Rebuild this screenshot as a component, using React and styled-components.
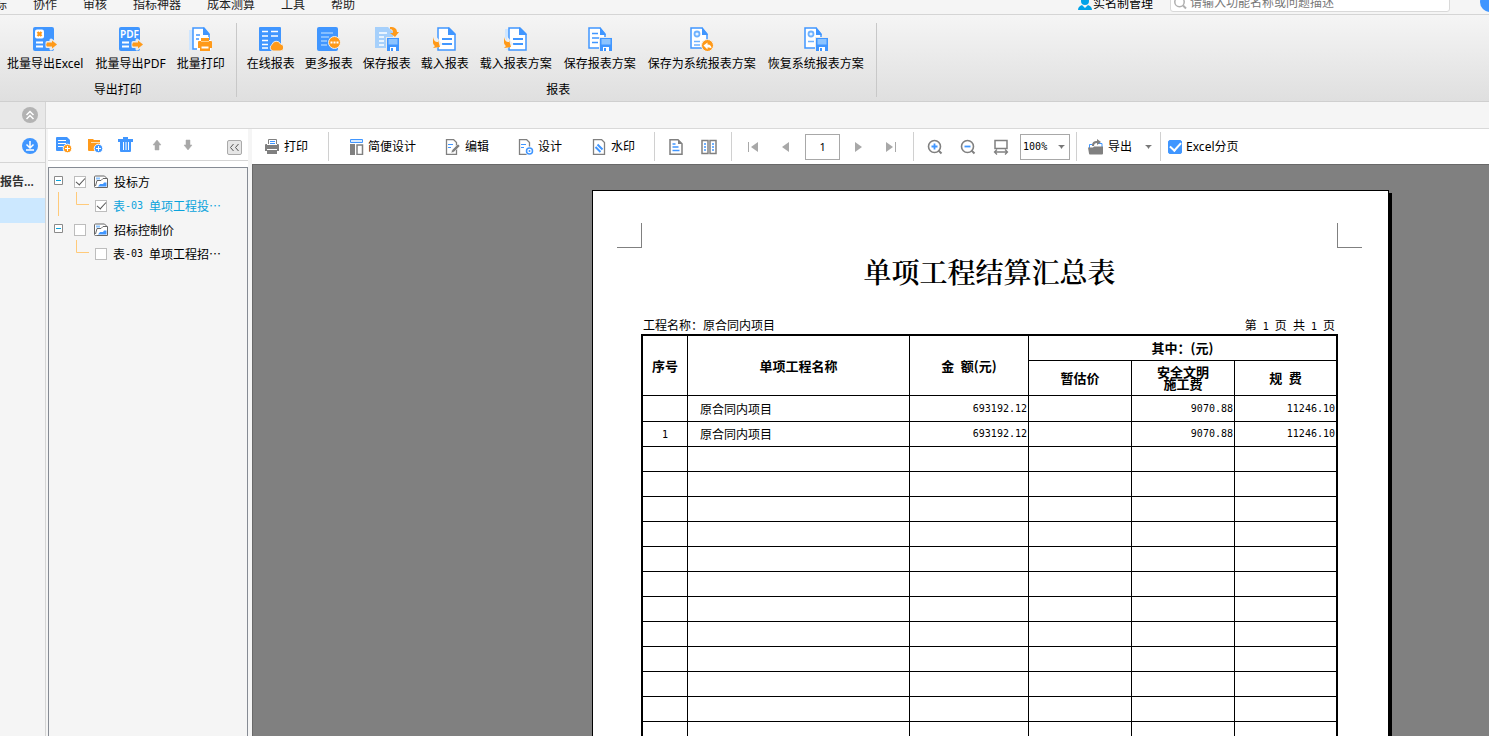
import { useState } from "react";
import styled, { createGlobalStyle, css } from "styled-components";

const GlobalStyle = createGlobalStyle`
  * {
    box-sizing: border-box;
  }
  body {
    margin: 0;
    overflow: hidden;
    color: #000;
    font-family: "Noto Sans", "Noto Sans CJK SC", sans-serif;
    font-size: 12px;
    line-height: 16px;
  }
  button, input, select {
    font: inherit;
    color: inherit;
  }
  svg {
    display: block;
    flex: none;
  }
`;

const Shell = styled.div`
  display: flex;
  flex-direction: column;
  height: 100vh;
  background: #f5f5f5;
`;

const PlainButton = styled.button.attrs({ type: "button" })`
  display: flex;
  align-items: center;
  justify-content: center;
  padding: 0;
  border: none;
  background: transparent;
  white-space: nowrap;
  cursor: pointer;
`;

/* ---------- top menu ---------- */

const TopBar = styled.header`
  display: flex;
  align-items: flex-end;
  flex: none;
  height: 15px;
  overflow: hidden;
  border-bottom: 1px solid #d5d5d5;
`;

const Menu = styled.nav`
  display: flex;
  margin-left: -18px;
`;

const MenuItem = styled(PlainButton)`
  height: 18px;
  padding: 0 13px;
  color: #222;
`;

const Account = styled(PlainButton)`
  height: 20px;
  gap: 1px;
  margin: 0 17px 0 auto;
`;

const SearchBox = styled.label`
  display: flex;
  align-items: center;
  width: 280px;
  height: 18px;
  margin: 0 30px 2px 0;
  padding: 0 2px;
  border: 1px solid #d9d9d9;
  border-radius: 3px;
  background: #fff;
`;

const SearchInput = styled.input`
  flex: 1;
  min-width: 0;
  padding: 0 1px;
  border: none;
  outline: 0;
  background: transparent;

  &::placeholder {
    color: #777;
    opacity: 1;
  }
`;

const RoundButton = styled(PlainButton)`
  flex: none;
  width: 20px;
  height: 20px;
  margin: 0 -11px 2px 0;
  border-radius: 50%;
  background: #4096ff;
  color: #fff;
`;

/* ---------- ribbon ---------- */

const Ribbon = styled.section`
  display: flex;
  flex: none;
  height: 87px;
  padding: 8px 0 4px;
  border-bottom: 1px solid #cfcfcf;
  background: linear-gradient(#f5f5f5, #dfdfdf);
`;

const RibbonGroup = styled.div`
  display: flex;
  flex-direction: column;
  align-items: center;
  padding: 4px 6px 0 ${(props) => props.$left}px;
  border-right: 1px solid #c8c8c8;
`;

const RibbonRow = styled.div`
  display: flex;
`;

const RibbonButton = styled(PlainButton)`
  flex-direction: column;
  gap: 5px;
  padding: 0 ${(props) => (props.$wide ? 6 : 5)}px;
`;

const RibbonLabel = styled.div`
  margin-top: 10px;
  padding-left: 5px;
`;

/* ---------- body ---------- */

const Body = styled.div`
  display: flex;
  flex: 1;
  min-height: 0;
`;

const Rail = styled.aside`
  flex: none;
  width: 46px;
  border-right: 1px solid #d5d5d5;
`;

const RailCell = styled.div`
  display: flex;
  align-items: center;
  justify-content: flex-end;
  height: ${(props) => props.$height}px;
  padding-right: 7px;
  border-bottom: 1px solid #d5d5d5;
  background: ${(props) => (props.$dark ? "#e8e8e8" : "transparent")};
`;

const RailTitle = styled.div`
  height: 35px;
  color: #333;
  font-weight: 600;
  line-height: 38px;
  white-space: nowrap;
`;

const RailSelected = styled.div`
  height: 25px;
  background: #cce8ff;
`;

const Main = styled.main`
  display: flex;
  flex-direction: column;
  flex: 1;
  min-width: 0;
`;

const TabStrip = styled.div`
  flex: none;
  height: 27px;
  border-bottom: 1px solid #d9d9d9;
`;

const Workspace = styled.div`
  display: flex;
  flex: 1;
  min-height: 0;
  padding-left: 2px;
`;

const Side = styled.section`
  display: flex;
  flex-direction: column;
  flex: none;
  width: 200px;
  margin-right: 4px;
  background: #fff;
`;

const SideTools = styled.div`
  display: flex;
  align-items: center;
  height: 32px;
  margin-bottom: 6px;
  border-bottom: 1px solid #d5d5d5;
`;

const SideTool = styled(PlainButton)`
  width: 31px;
  height: 31px;
`;

const CollapseButton = styled(PlainButton)`
  width: 15px;
  height: 15px;
  margin: 5px 6px 0 auto;
  border: 1px solid #aaa;
  border-radius: 2px;
  background: #e6e6e6;
`;

const Tree = styled.ul`
  flex: 1;
  margin: 0;
  padding: 2px 0 0;
  border: 1px solid #868b94;
  border-bottom: none;
  background: #f5f5f5;
  list-style: none;
`;

const SubTree = styled.ul`
  margin: 0;
  padding: 0;
  list-style: none;
`;

const TreeRow = styled.div`
  display: flex;
  align-items: center;
  height: 24px;
  padding-left: ${(props) => (props.$child ? 0 : 5)}px;
`;

const Toggle = styled(PlainButton)`
  width: 9px;
  height: 9px;
  margin: 0 11px 4px 0;
`;

const TreeLabel = styled.label`
  display: flex;
  align-items: center;
  gap: ${(props) => (props.$child ? 6 : 7)}px;
  color: ${(props) => (props.$active ? "#0aa3dc" : "#000")};
  font-family: "Noto Sans CJK SC", sans-serif;
  white-space: nowrap;

  svg {
    margin-right: -2px;
  }
`;

const TreeText = styled.span`
  display: flex;
`;

const Code = styled.span`
  font-family: "DejaVu Sans Mono", monospace;
  font-size: 10px;
  white-space: pre;
`;

const tick = css`
  &:checked::after {
    content: "";
    width: ${(props) => (props.$blue ? 5 : 4)}px;
    height: ${(props) => (props.$blue ? 9 : 8)}px;
    margin-top: -3px;
    border: solid ${(props) => (props.$blue ? "#fff" : "#555")};
    border-width: ${(props) => (props.$blue ? "0 2px 2px 0" : "0 1px 1px 0")};
    transform: rotate(42deg);
  }
`;

const Checkbox = styled.input.attrs({ type: "checkbox" })`
  display: flex;
  align-items: center;
  justify-content: center;
  flex: none;
  appearance: none;
  width: ${(props) => (props.$blue ? 14 : 12)}px;
  height: ${(props) => (props.$blue ? 14 : 12)}px;
  margin: 0;
  border: 1px solid ${(props) => (props.$blue ? "#4096ff" : "#bdbdbd")};
  border-radius: ${(props) => (props.$blue ? 2 : 0)}px;
  background: ${(props) => (props.$blue ? "#4096ff" : "#fff")};
  ${tick}
`;

/* ---------- report toolbar ---------- */

const Report = styled.section`
  display: flex;
  flex-direction: column;
  flex: 1;
  min-width: 0;
`;

const Toolbar = styled.div`
  display: flex;
  align-items: center;
  flex: none;
  height: 35px;
  background: #fff;
`;

const ToolGroup = styled.div`
  display: flex;
  align-items: center;
  flex: none;
  gap: ${(props) => props.$gap || 0}px;
  height: 29px;
  padding: ${(props) => (props.$icons ? "0 6px 0 4px" : "0 5px")};
  border-right: ${(props) => (props.$last ? "none" : "1px solid #d0d0d0")};
`;

const ToolButton = styled(PlainButton)`
  gap: 4px;
  height: 28px;
  padding: 0 14px;
`;

const PrintButton = styled(ToolButton)`
  padding: 0 15px 0 7px;
`;

const IconButton = styled(PlainButton)`
  width: 33px;
  height: 28px;
`;

const PageInput = styled.input`
  width: 35px;
  height: 26px;
  margin: 0 1px 0 3px;
  padding: 0 0 1px;
  border: 1px solid #a8a8a8;
  outline: 0;
  font-size: 11px;
  text-align: center;
`;

const ZoomField = styled.div`
  display: grid;
  align-items: center;
  margin-left: 3px;

  > * {
    grid-area: 1 / 1;
  }
  svg {
    justify-self: end;
    margin-right: 5px;
    pointer-events: none;
  }
`;

const ZoomSelect = styled.select`
  appearance: none;
  width: 50px;
  height: 26px;
  padding: 0 2px;
  border: 1px solid #a8a8a8;
  border-radius: 0;
  outline: 0;
  background: #fff;
  font-family: "DejaVu Sans Mono", monospace;
  font-size: 10px;
`;

const ExportButton = styled(PlainButton)`
  gap: 4px;
  padding: 0 3px 0 6px;

  svg:last-child {
    margin-left: 9px;
  }
`;

const CheckLabel = styled.label`
  display: flex;
  align-items: center;
  gap: 4px;
  padding-left: 2px;
  white-space: nowrap;
`;

/* ---------- report page ---------- */

const Preview = styled.div`
  display: flex;
  justify-content: flex-end;
  align-items: flex-start;
  flex: 1;
  min-height: 0;
  padding: 25px 100px 0 20px;
  overflow: hidden;
  border: solid #696969;
  border-width: 1px 0 0 1px;
  background: #808080;
`;

const Page = styled.article`
  flex: none;
  width: 797px;
  padding: 32px 26px 60px 24px;
  border: 1px solid #000;
  background: #fff;
  box-shadow: 3px 3px 0 #000;
  font-family: "Noto Sans CJK SC", sans-serif;
`;

const Corners = styled.div`
  display: flex;
  justify-content: space-between;
`;

const Corner = styled.span`
  width: 25px;
  height: 25px;
  border-bottom: 1px solid #808080;
  border-${(props) => props.$side}: 1px solid #808080;
`;

const Sheet = styled.div`
  padding: 0 24px;
`;

const Title = styled.h1`
  margin: 3px 0 26px;
  font-family: "Noto Serif CJK SC", "Noto Sans CJK SC", serif;
  font-size: 28px;
  font-weight: 600;
  line-height: 40px;
  text-align: center;
`;

const Info = styled.div`
  display: flex;
  justify-content: space-between;
  height: 17px;
  padding: 0 3px 0 2px;
`;

const Table = styled.table`
  width: 100%;
  table-layout: fixed;
  border: 2px solid #000;
  border-collapse: separate;
  border-spacing: 0;
`;

const Col = styled.col`
  width: ${(props) => (props.$width ? `${props.$width}px` : "auto")};
`;

const cell = css`
  padding: 0;
  border: solid #000;
  border-width: 0 1px 1px 0;
`;

const Th = styled.th`
  ${cell}
  ${(props) => props.$edge && "border-right-width: 0;"}
  font-size: 13px;
  font-weight: 700;
  line-height: 12px;
  white-space: pre-line;
`;

const Td = styled.td`
  ${cell}
  text-align: center;
  line-height: 16px;

  &:last-child {
    border-right-width: 0;
  }
`;

const NameTd = styled(Td)`
  padding-left: 12px;
  text-align: left;
`;

const NumTd = styled(Td)`
  padding-right: 1px;
  font-family: "DejaVu Sans Mono", monospace;
  font-size: 10px;
  text-align: right;
`;

const Row = styled.tr`
  height: ${(props) => props.$height}px;
`;

/* ---------- icons ---------- */

const BLUE = "#4096ff";
const ORANGE = "#ff9a1a";
const GRAY = "#808080";

const Icon24 = ({ children }) => (
  <svg width="24" height="24" viewBox="0 0 24 24" fill="none">{children}</svg>
);
const Icon16 = ({ children }) => (
  <svg width="16" height="16" viewBox="0 0 16 16" fill="none">{children}</svg>
);

const ExportArrow = () => (
  <>
    <path d="M14 15.500h4V13l6 4.500-6 4.500v-2.500h-4z" fill="#ebebeb" stroke="#ebebeb" strokeWidth="3" strokeLinejoin="round" />
    <path d="M14 15.500h5V13.500l5 4-5 4v-2h-5q-1.500-2 0-4z" fill={ORANGE} />
  </>
);

const ExcelIcon = () => (
  <Icon24>
    <rect x="0" y="0" width="21" height="24" rx="2" fill={BLUE} />
    <rect x="2" y="2.500" width="9" height="9" rx="2" fill="#fff" />
    <path d="M4.500 5l4 4M8.500 5l-4 4" stroke={ORANGE} strokeWidth="2.400" />
    <path d="M3 15.500h7M3 19.500h7" stroke="#fff" strokeWidth="1.800" />
    <ExportArrow />
  </Icon24>
);

const PdfIcon = () => (
  <Icon24>
    <rect x="0" y="0" width="21" height="24" rx="2" fill={BLUE} />
    <text x="10.500" y="10.500" textAnchor="middle" fill="#fff" fontSize="10" fontWeight="600" fontFamily="Noto Sans">PDF</text>
    <path d="M3 15.500h7M3 19.500h7" stroke="#fff" strokeWidth="1.800" />
    <ExportArrow />
  </Icon24>
);

const PrintBatchIcon = () => (
  <Icon24>
    <path d="M0 3h4v20H0z" fill="#cfe6ff" />
    <path d="M4 1h11l5 6v15H4z" fill="#fff" stroke={BLUE} strokeWidth="1.500" />
    <path d="M14 0l7 8h-7z" fill={BLUE} />
    <path d="M7 8h4M7 12h3" stroke={BLUE} strokeWidth="1.500" />
    <path d="M11 10h9v3h2v10H8V13h3z" fill="#fff" />
    <path d="M12 11h8v3h2q1 0 1 1v6h-2v3H11v-3H9v-6q0-1 1-1h2z" fill={ORANGE} />
    <path d="M12 14.500h8" stroke="#ffd08a" />
    <path d="M12.500 20.500h7" stroke="#fff" strokeWidth="2" />
  </Icon24>
);

const OnlineIcon = () => (
  <Icon24>
    <rect x="0" y="0" width="22" height="24" rx="1" fill={BLUE} />
    <path d="M3 4.500h6M12 4.500h7M3 9h6M12 9h7M3 13.500h6M3 17.500h6M3 21h6" stroke="#fff" strokeWidth="1.600" />
    <path d="M14 24a3.500 3.500 0 0 1-1-6.500 4.500 4.500 0 0 1 8.500-.5A3.500 3.500 0 0 1 21 24z" fill={ORANGE} stroke="#ebebeb" />
  </Icon24>
);

const MoreIcon = () => (
  <Icon24>
    <rect x="0" y="0" width="21" height="24" rx="2" fill={BLUE} />
    <path d="M4 6h12M4 10h8M4 14h6M4 18h6" stroke="#9ccbff" strokeWidth="1.500" />
    <circle cx="17.500" cy="15.500" r="6" fill={ORANGE} stroke="#f0f0f0" />
    <path d="M13.500 15.500h2M16.500 15.500h2M19.500 15.500h2" stroke="#fff" strokeWidth="2" />
  </Icon24>
);

const Floppy = () => (
  <>
    <path d="M11 10h13v14H11z" fill="#ebebeb" />
    <path d="M12 11h12v13H12z" fill={BLUE} />
    <path d="M13.500 12h9v5.500h-9z" fill="#8cc4ff" />
    <path d="M15 20h6v4h-6z" fill="#fff" />
    <path d="M16 21h2v3h-2z" fill={BLUE} />
  </>
);

const SaveIcon = () => (
  <Icon24>
    <path d="M0 0h13l5 5v16H0z" fill="#a6d0fb" />
    <path d="M4 6h8M4 10h5M4 14h5M4 18h5" stroke="#fff" strokeWidth="1.500" />
    <path d="M15 0c5 0 7 2 7 5h2l-4 5-5-4h3c0-3-1-4-3-4z" fill={ORANGE} />
    <Floppy />
  </Icon24>
);

const LoadIcon = ({ pale }) => (
  <Icon24>
    {pale && <path d="M1 2h8v21H1z" fill="#cfe6ff" />}
    <path d="M5 1h11l6 6v16H5z" fill="#fff" stroke={BLUE} strokeWidth="1.500" />
    <path d="M15 0l8 8h-8z" fill={BLUE} />
    <path d="M9 12h10M9 17h10" stroke={BLUE} strokeWidth="1.800" />
    <path d="M0 10c1 4 2 5 4 5v-3l4 5-6 4v-3c-2-1-3-4-2-8z" fill="#f0f0f0" stroke="#f0f0f0" strokeWidth="2" />
    <path d="M0 10c1 4 2 5 5 5v-2l2 7-7 1 2-2c-2-1-3-5-2-9z" fill={ORANGE} />
  </Icon24>
);

const DocOutline = () => (
  <>
    <path d="M1 1h11l5 6v14H1z" fill="#fff" stroke={BLUE} strokeWidth="1.500" />
    <path d="M12 0l6 8h-6z" fill={BLUE} />
  </>
);

const SavePlanIcon = () => (
  <Icon24>
    <DocOutline />
    <path d="M4 6.500h6M4 11h8M4 15.500h6" stroke={BLUE} strokeWidth="1.500" />
    <Floppy />
  </Icon24>
);

const SystemIcon = ({ restore }) => (
  <Icon24>
    <DocOutline />
    <circle cx="7" cy="7" r="2.500" fill="#e9f4ff" stroke="#6fb2ff" strokeWidth="1.800" />
    <path d="M4 14.500h6" stroke="#6fb2ff" strokeWidth="1.500" />
    {restore ? (
      <Floppy />
    ) : (
      <>
        <path d="M4 18h6" stroke="#6fb2ff" strokeWidth="1.500" />
        <circle cx="17.500" cy="18.500" r="6" fill={ORANGE} stroke="#f0f0f0" />
        <path d="M13.500 18.500l4-3v2c3 0 4 2 4 4-1-1-2-1-4-1v2z" fill="#fff" />
      </>
    )}
  </Icon24>
);

const PersonIcon = () => (
  <svg width="14" height="14" viewBox="0 0 14 14" fill="#00a2e8">
    <circle cx="7" cy="4" r="4" />
    <path d="M0 13c0-3 2-4 4-5l3 3 3-3c2 1 4 2 4 5z" />
  </svg>
);

const SearchIcon = () => (
  <Icon16>
    <circle cx="6.500" cy="7" r="4.700" stroke="#b0b0b0" strokeWidth="1.500" />
    <path d="M10 10.500l3 3" stroke="#b0b0b0" strokeWidth="2" />
  </Icon16>
);

const UpIcon = () => (
  <Icon16>
    <circle cx="8" cy="8" r="8" fill="#b3b3b3" />
    <path d="M4.500 8L8 4.500 11.500 8M4.500 12L8 8.500l3.500 3.500" stroke="#fff" strokeWidth="1.500" />
  </Icon16>
);

const DownIcon = () => (
  <Icon16>
    <circle cx="8" cy="8" r="8" fill={BLUE} />
    <path d="M8 3v7M4.500 6.500L8 10l3.500-3.500M4 12h8" stroke="#fff" strokeWidth="1.500" />
  </Icon16>
);

const AddMark = ({ color }) => (
  <>
    <circle cx="11.500" cy="11.500" r="4.300" fill={color} stroke="#fff" />
    <path d="M9 11.500h5M11.500 9v5" stroke="#fff" strokeWidth="1" />
  </>
);

const NewReportIcon = () => (
  <Icon16>
    <path d="M0 1q0-1 1-1h10l3 3v11H1q-1 0-1-1z" fill={BLUE} />
    <path d="M2 3.500h8M2 6.500h8M2 9.500h5" stroke="#fff" />
    <AddMark color={ORANGE} />
  </Icon16>
);

const NewFolderIcon = () => (
  <Icon16>
    <path d="M1 2h5l1 1h6v11H2q-1 0-1-1z" fill={ORANGE} />
    <path d="M4 5.500h9" stroke="#ffe0b3" />
    <AddMark color={BLUE} />
  </Icon16>
);

const TrashIcon = () => (
  <Icon16>
    <path d="M5 0h5v2h5v3h-2v9q0 1-1 1H3q-1 0-1-1V5H0V2h5z" fill={BLUE} />
    <path d="M5.500 5v8M8 5v8M10.500 5v8" stroke="#fff" />
  </Icon16>
);

const ArrowIcon = ({ down }) => (
  <Icon16>
    <path d={down ? "M6 3h4v5h2l-4 5-4-5h2z" : "M6 13h4V8h2L8 3 4 8h2z"} fill="#a8a8a8" stroke="#a8a8a8" strokeWidth=".5" />
  </Icon16>
);

const CollapseIcon = () => (
  <svg width="11" height="11" viewBox="0 0 11 11" fill="none" stroke="#555">
    <path d="M4.500 2L1.500 5.500l3 3.500M9.500 2l-3 3.500 3 3.500" />
  </svg>
);

const MinusIcon = () => (
  <svg width="9" height="9" viewBox="0 0 9 9" fill="none">
    <path d="M.5.5h8v8h-8z" fill="#fff" stroke="#8a8a8a" />
    <path d="M2 4.500h5" stroke="#0aa3dc" />
  </svg>
);

const TreeIcon = () => (
  <Icon16>
    <path d="M2.500 2h9l2 2v9.500h-11q-1 0-1-1V3q0-1 1-1z" fill="#fff" stroke="#666" />
    <path d="M3 3.500h4v2H3z" fill="#8cc4ff" />
    <path d="M2.500 12l1.500-5.500h4l2-2h4.500v9h-11" fill="#fff" stroke="#666" />
    <path d="M5 12.500l2-2.500h3l1-1.500h2.500v4z" fill={BLUE} />
  </Icon16>
);

const Guide = ({ line }) => (
  <svg width="46" height="24" viewBox="0 0 46 24" fill="none" stroke="#ffca7a" overflow="visible">
    {line && <path d="M9.500-2v24" />}
    <path d="M27.500-2v12.500H40" />
  </svg>
);

const PrinterIcon = () => (
  <Icon16>
    <path d="M4.500 5V.5h8V5" fill="#fff" stroke={GRAY} />
    <path d="M6 2.500h5M6 4.500h5" stroke={BLUE} />
    <path d="M2 5h1v1h10V5h1q1 0 1 1v6h-2v3H3v-3H1V6q0-1 1-1z" fill={GRAY} />
    <path d="M3 10.500h10" stroke="#fff" />
  </Icon16>
);

const LayoutIcon = () => (
  <Icon16>
    <path d="M2.500.5h12v3h-12z" fill="#d9ebff" stroke={BLUE} />
    <path d="M2 5h5v11H2z" fill={GRAY} />
    <path d="M9 6h5.500v9.500H9z" stroke={GRAY} strokeWidth="1.500" />
  </Icon16>
);

const SheetShape = () => <path d="M1.500.5h7l3 3v12h-10z" fill="#fff" stroke={GRAY} strokeWidth="1.300" />;

const EditIcon = () => (
  <Icon16>
    <SheetShape />
    <path d="M3 5.500h5M3 8.500h3" stroke={BLUE} />
    <path d="M6 14l1-3 6-6 2 2-6 6z" fill={GRAY} stroke="#fff" strokeWidth=".5" />
  </Icon16>
);

const DesignIcon = () => (
  <Icon16>
    <SheetShape />
    <path d="M3 5.500h5M3 8.500h3" stroke={BLUE} />
    <circle cx="11.500" cy="12" r="4.500" fill="#fff" />
    <circle cx="11.500" cy="12" r="3" stroke={BLUE} strokeWidth="1.500" />
    <circle cx="11.500" cy="12" r="1" fill={BLUE} />
  </Icon16>
);

const WatermarkIcon = () => (
  <Icon16>
    <path d="M2.500.5h8l3 3v12h-11z" fill="#fff" stroke={GRAY} strokeWidth="1.300" />
    <path d="M6.500 5.500l5 5M4.500 8l5 5" stroke={BLUE} strokeWidth="2" />
  </Icon16>
);

const PageIcon = () => (
  <Icon16>
    <path d="M2 .8h8l4 4v10.400H2z" fill="#fff" stroke={GRAY} strokeWidth="1.500" />
    <path d="M10 1v4h4z" fill={GRAY} />
    <path d="M4.500 5h3M4.500 8h6M4.500 11.500h7" stroke={BLUE} strokeWidth="1.500" />
  </Icon16>
);

const BookIcon = () => (
  <Icon16>
    <path d="M1 1.500h6v13H1zM9 1.500h6v13H9z" fill="#fff" stroke={GRAY} strokeWidth="1.500" />
    <path d="M3 5h2M3 8h2M3 11h2M11 5h2M11 8h2M11 11h2" stroke={BLUE} strokeWidth="1.500" />
  </Icon16>
);

const NavIcon = ({ end, flip }) => (
  <Icon16>
    <g transform={flip ? "matrix(-1 0 0 1 16 0)" : undefined} fill="#a8a8a8">
      {end && <path d="M3 3h1v10H3z" />}
      <path d={end ? "M13 3v10L6 8z" : "M11 3v10L4 8z"} />
    </g>
  </Icon16>
);

const ZoomIcon = ({ plus }) => (
  <Icon16>
    <circle cx="7.500" cy="7.500" r="6" stroke={GRAY} strokeWidth="1.600" />
    <path d="M11.500 11.500l3 3" stroke={GRAY} strokeWidth="2" />
    <path d={plus ? "M4.500 7.500h6M7.500 4.500v6" : "M4.500 7.500h6"} stroke={BLUE} strokeWidth="1.800" />
  </Icon16>
);

const FitIcon = () => (
  <Icon16>
    <path d="M2 1.500h12v8H2z" stroke={GRAY} strokeWidth="1.500" />
    <path d="M2 13h12M4 10.500L1.500 13 4 15.500M12 10.500l2.500 2.500-2.500 2.500" stroke={GRAY} strokeWidth="1.300" />
  </Icon16>
);

const ExportIcon = () => (
  <Icon16>
    <path d="M4 5.500H1.500V9M10 4.500h4V9" stroke={BLUE} />
    <path d="M0 8.500h5l1-1h9v7q0 1-1 1H2q-1 0-1-1z" fill={GRAY} />
    <path d="M4 7c0-4 2-5 5-5V0l4 3-4 3V4C7 4 6 5 6 7z" fill={GRAY} />
  </Icon16>
);

const Caret = () => (
  <svg width="7" height="4" viewBox="0 0 7 4">
    <path d="M1 0h5L3.500 4zM0 0h7L3.500 3z" fill="#777" />
  </svg>
);

/* ---------- data ---------- */

const menus = ["标", "协作", "审核", "指标神器", "成本测算", "工具", "帮助"];

const exportTools = [
  { label: "批量导出Excel", icon: <ExcelIcon />, wide: true },
  { label: "批量导出PDF", icon: <PdfIcon />, wide: true },
  { label: "批量打印", icon: <PrintBatchIcon /> },
];

const reportTools = [
  { label: "在线报表", icon: <OnlineIcon /> },
  { label: "更多报表", icon: <MoreIcon /> },
  { label: "保存报表", icon: <SaveIcon /> },
  { label: "载入报表", icon: <LoadIcon /> },
  { label: "载入报表方案", icon: <LoadIcon pale />, wide: true },
  { label: "保存报表方案", icon: <SavePlanIcon />, wide: true },
  { label: "保存为系统报表方案", icon: <SystemIcon />, wide: true },
  { label: "恢复系统报表方案", icon: <SystemIcon restore />, wide: true },
];

const designTools = [
  { label: "简便设计", icon: <LayoutIcon /> },
  { label: "编辑", icon: <EditIcon /> },
  { label: "设计", icon: <DesignIcon /> },
  { label: "水印", icon: <WatermarkIcon /> },
];

const tree = [
  { id: "bid", label: "投标方", child: "单项工程投…", line: true },
  { id: "control", label: "招标控制价", child: "单项工程招…" },
];

const rows = [
  { no: "", name: "原合同内项目", total: "693192.12", safety: "9070.88", fee: "11246.10" },
  { no: "1", name: "原合同内项目", total: "693192.12", safety: "9070.88", fee: "11246.10" },
  ...Array.from({ length: 22 }, () => ({})),
];

const RibbonSection = ({ title, tools, left }) => (
  <RibbonGroup $left={left}>
    <RibbonRow>
      {tools.map((tool) => (
        <RibbonButton key={tool.label} $wide={tool.wide}>
          {tool.icon}
          {tool.label}
        </RibbonButton>
      ))}
    </RibbonRow>
    <RibbonLabel>{title}</RibbonLabel>
  </RibbonGroup>
);

const ReportTable = () => (
  <Table>
    <colgroup>
      <Col $width={45} />
      <Col />
      <Col $width={119} />
      <Col $width={103} />
      <Col $width={103} />
      <Col $width={101} />
    </colgroup>
    <thead>
      <Row $height={25}>
        <Th rowSpan={2}>序号</Th>
        <Th rowSpan={2}>单项工程名称</Th>
        <Th rowSpan={2}>金&ensp;额(元)</Th>
        <Th colSpan={3} $edge>其中：(元)</Th>
      </Row>
      <Row $height={35}>
        <Th>暂估价</Th>
        <Th>{"安全文明\n施工费"}</Th>
        <Th $edge>规&ensp;费</Th>
      </Row>
    </thead>
    <tbody>
      {rows.map((row, i) => (
        <Row key={i} $height={i === 0 ? 26 : 25}>
          <Td>{row.no && <Code>{row.no}</Code>}</Td>
          <NameTd>{row.name}</NameTd>
          <NumTd>{row.total}</NumTd>
          <NumTd />
          <NumTd>{row.safety}</NumTd>
          <NumTd>{row.fee}</NumTd>
        </Row>
      ))}
    </tbody>
  </Table>
);

const App = () => {
  const [checked, setChecked] = useState({ bid: true, "bid-03": true });
  const [page, setPage] = useState("1");
  const [paging, setPaging] = useState(true);

  const toggle = (id) => setChecked({ ...checked, [id]: !checked[id] });

  return (
    <Shell>
      <GlobalStyle />
      <TopBar>
        <Menu>
          {menus.map((m) => <MenuItem key={m}>{m}</MenuItem>)}
        </Menu>
        <Account><PersonIcon />实名制管理</Account>
        <SearchBox>
          <SearchIcon />
          <SearchInput aria-label="搜索" placeholder="请输入功能名称或问题描述" />
        </SearchBox>
        <RoundButton aria-label="更多" />
      </TopBar>

      <Ribbon>
        <RibbonSection title="导出打印" tools={exportTools} left={1} />
        <RibbonSection title="报表" tools={reportTools} left={5} />
      </Ribbon>

      <Body>
        <Rail>
          <RailCell $height={27} $dark>
            <PlainButton aria-label="收起"><UpIcon /></PlainButton>
          </RailCell>
          <RailCell $height={34}>
            <PlainButton aria-label="展开"><DownIcon /></PlainButton>
          </RailCell>
          <RailTitle>报告...</RailTitle>
          <RailSelected />
        </Rail>

        <Main>
          <TabStrip />
          <Workspace>
            <Side>
              <SideTools>
                <SideTool aria-label="新建报表"><NewReportIcon /></SideTool>
                <SideTool aria-label="新建文件夹"><NewFolderIcon /></SideTool>
                <SideTool aria-label="删除"><TrashIcon /></SideTool>
                <SideTool aria-label="上移"><ArrowIcon /></SideTool>
                <SideTool aria-label="下移"><ArrowIcon down /></SideTool>
                <CollapseButton aria-label="折叠"><CollapseIcon /></CollapseButton>
              </SideTools>
              <Tree>
                {tree.map((node) => (
                  <li key={node.id}>
                    <TreeRow>
                      <Toggle aria-label="折叠节点"><MinusIcon /></Toggle>
                      <TreeLabel>
                        <Checkbox checked={!!checked[node.id]} onChange={() => toggle(node.id)} />
                        <TreeIcon />
                        <TreeText>{node.label}</TreeText>
                      </TreeLabel>
                    </TreeRow>
                    <SubTree>
                      <li>
                        <TreeRow $child>
                          <Guide line={node.line} />
                          <TreeLabel $child $active={node.line}>
                            <Checkbox
                              checked={!!checked[`${node.id}-03`]}
                              onChange={() => toggle(`${node.id}-03`)}
                            />
                            <TreeText lang="zh-CN">表<Code>-03 </Code>{node.child}</TreeText>
                          </TreeLabel>
                        </TreeRow>
                      </li>
                    </SubTree>
                  </li>
                ))}
              </Tree>
            </Side>

            <Report>
              <Toolbar>
                <ToolGroup>
                  <PrintButton><PrinterIcon />打印</PrintButton>
                </ToolGroup>
                <ToolGroup $gap={1}>
                  {designTools.map((tool) => (
                    <ToolButton key={tool.label}>{tool.icon}{tool.label}</ToolButton>
                  ))}
                </ToolGroup>
                <ToolGroup $icons>
                  <IconButton aria-label="单页"><PageIcon /></IconButton>
                  <IconButton aria-label="双页"><BookIcon /></IconButton>
                </ToolGroup>
                <ToolGroup $icons>
                  <IconButton aria-label="首页"><NavIcon end /></IconButton>
                  <IconButton aria-label="上一页"><NavIcon /></IconButton>
                  <PageInput aria-label="页码" value={page} onChange={(e) => setPage(e.target.value)} />
                  <IconButton aria-label="下一页"><NavIcon flip /></IconButton>
                  <IconButton aria-label="末页"><NavIcon end flip /></IconButton>
                </ToolGroup>
                <ToolGroup $icons>
                  <IconButton aria-label="放大"><ZoomIcon plus /></IconButton>
                  <IconButton aria-label="缩小"><ZoomIcon /></IconButton>
                  <IconButton aria-label="适合宽度"><FitIcon /></IconButton>
                  <ZoomField>
                    <ZoomSelect aria-label="缩放比例" defaultValue="100%">
                      <option>50%</option>
                      <option>100%</option>
                      <option>200%</option>
                    </ZoomSelect>
                    <Caret />
                  </ZoomField>
                </ToolGroup>
                <ToolGroup>
                  <ExportButton><ExportIcon />导出<Caret /></ExportButton>
                </ToolGroup>
                <ToolGroup $last>
                  <CheckLabel>
                    <Checkbox $blue checked={paging} onChange={() => setPaging(!paging)} />
                    Excel分页
                  </CheckLabel>
                </ToolGroup>
              </Toolbar>

              <Preview>
                <Page>
                  <Corners>
                    <Corner $side="right" />
                    <Corner $side="left" />
                  </Corners>
                  <Sheet>
                    <Title>单项工程结算汇总表</Title>
                    <Info>
                      <span>工程名称：原合同内项目</span>
                      <span>第<Code> 1 </Code>页<Code> </Code>共<Code> 1 </Code>页</span>
                    </Info>
                    <ReportTable />
                  </Sheet>
                </Page>
              </Preview>
            </Report>
          </Workspace>
        </Main>
      </Body>
    </Shell>
  );
};

export default App;
